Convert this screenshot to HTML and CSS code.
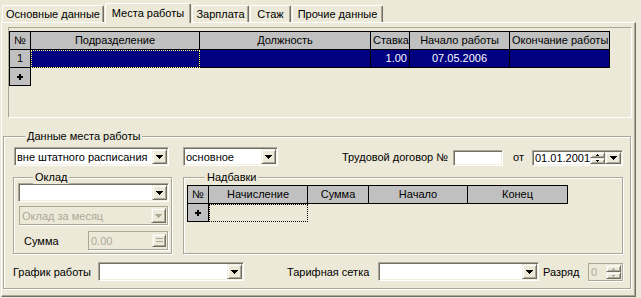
FILE: index.html
```html
<!DOCTYPE html>
<html lang="ru">
<head>
    <meta charset="UTF-8">
    <title>Места работы</title>
    <link rel="stylesheet" href="styles.css">
</head>
<body>
    <div class="tabs">
        <div class="tab t1">Основные данные</div>
        <div class="tab t2 active">Места работы</div>
        <div class="tab t3">Зарплата</div>
        <div class="tab t4">Стаж</div>
        <div class="tab t5">Прочие данные</div>
    </div>

    <div class="page">
        <!-- список мест работы -->
        <div class="grid-box">
            <div class="grid jobs">
                <div class="c head">№</div>
                <div class="c head">Подразделение</div>
                <div class="c head">Должность</div>
                <div class="c head">Ставка</div>
                <div class="c head">Начало работы</div>
                <div class="c head">Окончание работы</div>

                <div class="c head">1</div>
                <div class="c sel focus-y"></div>
                <div class="c sel"></div>
                <div class="c sel num">1.00</div>
                <div class="c sel mid">07.05.2006</div>
                <div class="c sel"></div>

                <div class="c head plus"><svg width="6" height="6" viewBox="0 0 6 6"><path d="M2 0h2v2h2v2h-2v2h-2v-2h-2v-2h2z"/></svg></div>
            </div>
        </div>

        <div class="group main-group">
            <span class="group-title">Данные места работы</span>

            <div class="row row-top">
                <div class="combo w-shtat">
                    <span class="val">вне штатного расписания</span>
                    <span class="drop"><svg width="7" height="4" viewBox="0 0 7 4"><path d="M0 0h7v1h-1v1h-1v1h-1v1h-1v-1h-1v-1h-1v-1h-1z"/></svg></span>
                </div>
                <div class="combo w-kind">
                    <span class="val">основное</span>
                    <span class="drop"><svg width="7" height="4" viewBox="0 0 7 4"><path d="M0 0h7v1h-1v1h-1v1h-1v1h-1v-1h-1v-1h-1v-1h-1z"/></svg></span>
                </div>
                <span class="lbl lbl-contract">Трудовой договор №</span>
                <div class="edit w-contract"></div>
                <span class="lbl lbl-from">от</span>
                <div class="edit date">
                    <span class="val">01.01.2001</span>
                    <span class="spin">
                        <span class="spin-btn"><svg width="3" height="2" viewBox="0 0 3 2"><path d="M1 0h1v1h1v1h-3v-1h1z"/></svg></span>
                        <span class="spin-btn"><svg width="3" height="2" viewBox="0 0 3 2"><path d="M0 0h3v1h-1v1h-1v-1h-1z"/></svg></span>
                    </span>
                    <span class="drop date-drop"><svg width="7" height="4" viewBox="0 0 7 4"><path d="M0 0h7v1h-1v1h-1v1h-1v1h-1v-1h-1v-1h-1v-1h-1z"/></svg></span>
                </div>
            </div>

            <div class="row row-mid">
                <div class="group oklad">
                    <span class="group-title">Оклад</span>
                    <div class="combo w-oklad">
                        <span class="val"></span>
                        <span class="drop"><svg width="7" height="4" viewBox="0 0 7 4"><path d="M0 0h7v1h-1v1h-1v1h-1v1h-1v-1h-1v-1h-1v-1h-1z"/></svg></span>
                    </div>
                    <div class="combo off w-period">
                        <span class="val">Оклад за месяц</span>
                        <span class="drop"><svg width="7" height="4" viewBox="0 0 7 4"><path d="M0 0h7v1h-1v1h-1v1h-1v1h-1v-1h-1v-1h-1v-1h-1z"/></svg></span>
                    </div>
                    <div class="row row-sum">
                        <span class="lbl lbl-sum">Сумма</span>
                        <div class="edit off w-sum">
                            <span class="val">0.00</span>
                            <span class="calc"><svg width="7" height="5" viewBox="0 0 7 5"><path d="M0 0h7v1h-7zM0 3h7v1h-7z"/></svg></span>
                        </div>
                    </div>
                </div>

                <div class="group extra">
                    <span class="group-title">Надбавки</span>
                    <div class="grid bonus">
                        <div class="c head">№</div>
                        <div class="c head">Начисление</div>
                        <div class="c head">Сумма</div>
                        <div class="c head">Начало</div>
                        <div class="c head">Конец</div>

                        <div class="c head plus"><svg width="6" height="6" viewBox="0 0 6 6"><path d="M2 0h2v2h2v2h-2v2h-2v-2h-2v-2h2z"/></svg></div>
                        <div class="c blank focus-k"></div>
                    </div>
                </div>
            </div>

            <div class="row row-bottom">
                <span class="lbl lbl-sched">График работы</span>
                <div class="combo w-sched">
                    <span class="val"></span>
                    <span class="drop"><svg width="7" height="4" viewBox="0 0 7 4"><path d="M0 0h7v1h-1v1h-1v1h-1v1h-1v-1h-1v-1h-1v-1h-1z"/></svg></span>
                </div>
                <span class="lbl lbl-tariff">Тарифная сетка</span>
                <div class="combo w-tariff">
                    <span class="val"></span>
                    <span class="drop"><svg width="7" height="4" viewBox="0 0 7 4"><path d="M0 0h7v1h-1v1h-1v1h-1v1h-1v-1h-1v-1h-1v-1h-1z"/></svg></span>
                </div>
                <span class="lbl lbl-grade">Разряд</span>
                <div class="edit off w-grade">
                    <span class="val">0</span>
                    <span class="spin">
                        <span class="spin-btn"><svg width="3" height="2" viewBox="0 0 3 2"><path d="M1 0h1v1h1v1h-3v-1h1z"/></svg></span>
                        <span class="spin-btn"><svg width="3" height="2" viewBox="0 0 3 2"><path d="M0 0h3v1h-1v1h-1v-1h-1z"/></svg></span>
                    </span>
                </div>
            </div>
        </div>
    </div>
</body>
</html>
```

FILE: styles.css
```css
body {
    margin: 0;
    background: #ece9d8;
    font-family: "Liberation Sans", Arial, sans-serif;
    font-size: 11px;
    color: #000;
}

/* вкладки */
.tabs {
    display: flex;
    align-items: flex-end;
    height: 22px;
}

.tab {
    box-sizing: border-box;
    height: 17px;
    margin-left: 1px;
    padding-top: 2px;
    border-top: 1px solid #fff;
    border-left: 1px solid #fff;
    border-right: 1px solid #716f64;
    border-radius: 2px 2px 0 0;
    box-shadow: inset -1px 0 0 #aca899;
    text-align: center;
    line-height: 13px;
    white-space: nowrap;
}

.t1 { width: 102px; margin-left: 2px; }
.t2 { width: 86px; }
.t3 { width: 57px; }
.t4 { width: 41px; }
.t5 { width: 91px; }

.tab.active {
    position: relative;
    z-index: 1;
    height: 20px;
    margin-bottom: -1px;
    padding-top: 3px;
    background: #ece9d8;
}

.page {
    box-sizing: border-box;
    width: 635px;
    height: 275px;
    margin-left: 1px;
    border-top: 1px solid #fff;
    border-left: 1px solid #fff;
    border-right: 1px solid #716f64;
    border-bottom: 1px solid #716f64;
    box-shadow: inset -1px -1px 0 #aca899;
}

/* таблицы */
.grid-box {
    box-sizing: border-box;
    width: 624px;
    height: 91px;
    margin: 4px 0 0 6px;
    padding-top: 3px;
    border: 1px solid;
    border-color: #aca899 #fff #fff #aca899;
}

.grid {
    display: grid;
    width: max-content;
    border-left: 1px solid #000;
    border-top: 1px solid #000;
}

.jobs { grid-template-columns: 21px 169px 171px 39px 100px 100px; }
.bonus { grid-template-columns: 21px 99px 61px 99px 100px; }

.grid .c {
    box-sizing: border-box;
    height: 18px;
    padding: 0 2px;
    border-right: 1px solid #000;
    border-bottom: 1px solid #000;
    line-height: 17px;
    white-space: nowrap;
    overflow: hidden;
}

.grid .head {
    background: #c0c0c0;
    text-align: center;
}

.grid .sel {
    background: #000080;
    color: #fff;
}

.grid .num { text-align: right; }
.grid .mid { text-align: center; }

.grid .plus {
    display: flex;
    align-items: center;
    justify-content: center;
}

.grid .blank {
    border: none;
    background: transparent;
}

.focus-y {
    outline: 1px dotted #ffff80;
    outline-offset: -1px;
}

.focus-k {
    outline: 1px dotted #000;
    outline-offset: -1px;
}

/* рамки групп */
.group {
    position: relative;
    box-sizing: border-box;
    border: 1px solid #aca899;
    box-shadow: inset 1px 1px 0 #fff, 1px 1px 0 #fff;
}

.group-title {
    position: absolute;
    top: -7px;
    left: 21px;
    padding: 0 2px;
    background: #ece9d8;
    line-height: 13px;
    white-space: nowrap;
}

.main-group {
    width: 628px;
    height: 153px;
    margin: 18px 0 0 1px;
}

.oklad {
    width: 159px;
    height: 77px;
    margin-left: 9px;
}

.oklad .group-title { left: 19px; }

.extra {
    width: 440px;
    height: 77px;
    margin-left: 11px;
}

.extra .bonus { margin: 7px 0 0 3px; }

.row {
    display: flex;
    align-items: center;
}

.row-top { height: 19px; margin-top: 10px; }
.row-mid { align-items: flex-start; margin-top: 11px; }
.row-bottom { height: 19px; margin-top: 8px; }
.row-sum { height: 19px; margin-top: 6px; }

.lbl {
    box-sizing: border-box;
    white-space: nowrap;
}

.lbl-contract { width: 111px; margin-left: 64px; }
.lbl-from { width: 19px; margin-left: 10px; }
.lbl-sum { width: 64px; margin-left: 10px; }
.lbl-sched { width: 85px; margin-left: 9px; }
.lbl-tariff { width: 91px; margin-left: 43px; }
.lbl-grade { width: 45px; margin-left: 4px; }

/* поля ввода */
.combo,
.edit {
    box-sizing: border-box;
    display: flex;
    align-items: center;
    height: 19px;
    padding: 1px;
    border: 1px solid;
    border-color: #aca899 #fff #fff #aca899;
    box-shadow: inset 1px 1px 0 #716f64, inset -1px -1px 0 #f1efe2;
    background: #fff;
}

.val {
    flex: 1;
    padding-left: 1px;
    overflow: hidden;
    white-space: nowrap;
}

.drop,
.spin-btn,
.calc {
    box-sizing: border-box;
    display: flex;
    align-items: center;
    justify-content: center;
    background: #ece9d8;
    border: 1px solid;
    border-color: #f1efe2 #716f64 #716f64 #f1efe2;
    box-shadow: inset 1px 1px 0 #fff, inset -1px -1px 0 #aca899;
}

.drop {
    width: 15px;
    height: 15px;
}

.spin {
    display: flex;
    flex-direction: column;
    width: 15px;
}

.spin-btn {
    height: 6px;
}

.w-shtat { width: 155px; margin-left: 10px; }
.w-kind { width: 95px; margin-left: 14px; }
.w-contract { width: 50px; height: 16px; align-self: flex-end; }

.date {
    width: 91px;
    height: 16px;
    align-self: flex-end;
}

.date .val { padding-left: 1px; }
.date .drop { width: 16px; height: 12px; }

.w-oklad { width: 151px; margin: 5px 0 0 4px; }
.w-period { width: 149px; margin: 4px 0 0 5px; }
.w-sum { width: 80px; }
.w-sched { width: 146px; }
.w-tariff { width: 161px; }
.w-grade { width: 35px; height: 18px; align-self: flex-end; }

/* отключённые поля */
.off {
    border: 1px solid #aca899;
    box-shadow: 1px 1px 0 #fff;
    background: #ece9d8;
    color: #aca899;
}

.off svg { fill: #aca899; }

.calc {
    width: 14px;
    height: 13px;
}

.w-grade .spin-btn { height: 7px; }
```
